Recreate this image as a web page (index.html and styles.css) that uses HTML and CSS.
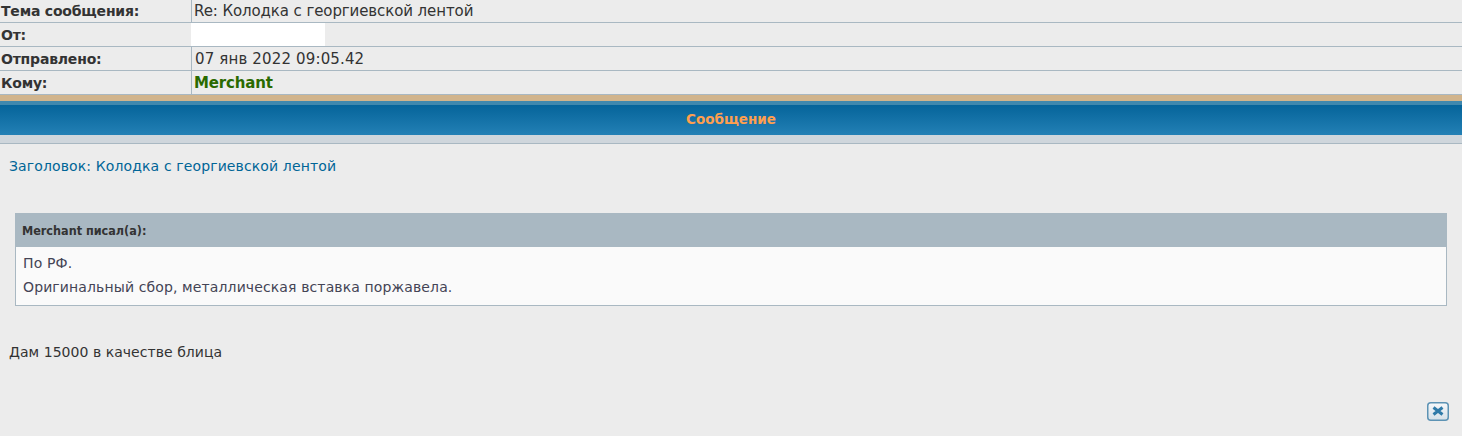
FILE: index.html
```html
<!DOCTYPE html>
<html lang="ru">
<head>
<meta charset="utf-8">
<title>Сообщение</title>
<link rel="stylesheet" href="styles.css">
</head>
<body>
<div class="meta">
  <div class="row"><div class="label">Тема сообщения:</div><div class="value">Re: Колодка с георгиевской лентой</div></div>
  <div class="row"><div class="label">От:</div><div class="value"><span class="mask"></span></div></div>
  <div class="row"><div class="label">Отправлено:</div><div class="value date">07 янв 2022 09:05.42</div></div>
  <div class="row"><div class="label">Кому:</div><div class="value"><span class="user">Merchant</span></div></div>
</div>
<div class="tan"></div>
<div class="bar">Сообщение</div>
<div class="subbar"></div>
<div class="post">
  <div class="title">Заголовок: Колодка с георгиевской лентой</div>
  <div class="quote">
    <div class="quote-head">Merchant писал(а):</div>
    <div class="quote-body">По РФ.<br>Оригинальный сбор, металлическая вставка поржавела.</div>
  </div>
  <div class="text">Дам 15000 в качестве блица</div>
  <div class="actions">
    <svg class="del" width="22" height="19" viewBox="0 0 22 19"><defs><linearGradient id="delfill" x1="0" y1="0" x2="0" y2="1"><stop offset="0" stop-color="#f6f8fa"/><stop offset="1" stop-color="#d5e0e8"/></linearGradient></defs><rect x="0.75" y="0.75" width="20.5" height="17.5" rx="3" fill="url(#delfill)" stroke="#5d93b4" stroke-width="1.5"/><path d="M6.5 5.5l9 7M15.5 5.5l-9 7" stroke="#2f7aa8" stroke-width="3"/></svg>
  </div>
</div>
</body>
</html>
```
FILE: styles.css
```css
html, body { margin: 0; padding: 0; }
body { background: #ececec; font-family: "DejaVu Sans", Verdana, sans-serif; font-size: 14px; color: #333; height: 436px; overflow: hidden; }
.row { display: flex; height: 23px; border-bottom: 1px solid #a9b8c2; }
.row:first-child { height: 22px; }
.label { width: 190px; padding-left: 1px; border-right: 1px solid #a9b8c2; font-weight: bold; line-height: 25px; letter-spacing: -0.2px; }
.row:first-child .label, .row:first-child .value { line-height: 23px; }
.value { padding-left: 2px; line-height: 25px; font-size: 15px; letter-spacing: -0.1px; }
.date { padding-left: 3px; letter-spacing: 0.15px; }
.mask { display: block; width: 134px; height: 23px; margin-left: -3px; background: #fff; }
.user { font-weight: bold; color: #2a6a00; letter-spacing: -0.15px; }
.tan { height: 6px; background: #d1b48c; }
.bar { height: 30px; line-height: 28px; text-align: center; font-weight: bold; font-size: 13.5px; color: #ff9f4f; background: linear-gradient(#05649a, #2380b5); border-top: 4px solid #3f88ae; }
.subbar { height: 8px; background: #cfd6dc; border-bottom: 1px solid #a9b8c2; }
.post { padding: 13px 15px 0 9px; }
.title { color: #006597; line-height: 18px; letter-spacing: 0.12px; }
.quote { margin: 38px 0 0 6px; border: 1px solid #a9b8c2; background: #fafafa; }
.quote-head { height: 33px; line-height: 33px; padding-left: 6px; background: #a9b8c2; font-family: "DejaVu Sans Condensed", "DejaVu Sans", sans-serif; font-weight: bold; font-size: 12.5px; }
.quote-body { padding: 4px 7px 6px; line-height: 24px; color: #445; letter-spacing: 0.12px; }
.text { margin-top: 37px; line-height: 18px; letter-spacing: 0.04px; }
.actions { display: flex; justify-content: flex-end; margin: 41px -2px 0 0; }
```
